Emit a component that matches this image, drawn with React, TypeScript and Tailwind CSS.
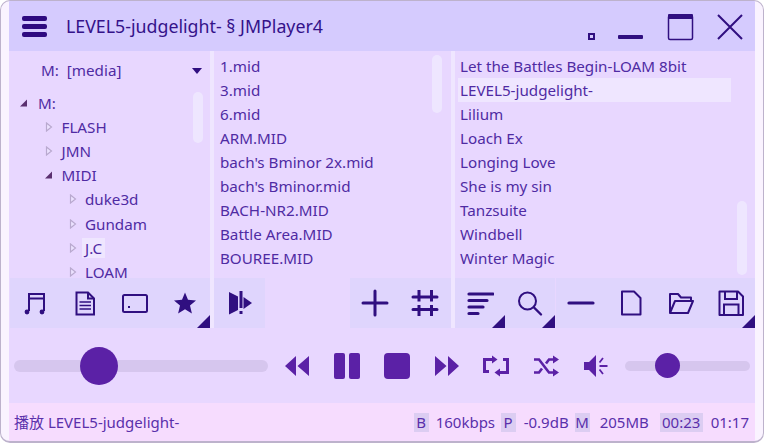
import React from "react";

const FONT = { fontFamily: '"Noto Sans", "Noto Sans CJK SC", sans-serif' };
const IC = "#300f80";
const PL = "#5b21a6";

function Corner() {
  return (
    <svg width="13" height="13" viewBox="0 0 13 13" className="absolute right-0 bottom-0">
      <path d="M13 0V13H0Z" fill={IC} />
    </svg>
  );
}

function Btn({ children, corner, w = "w-[50px]" }: { children: React.ReactNode; corner?: boolean; w?: string }) {
  return (
    <div className={`relative ${w} h-full flex items-center justify-center`}>
      {children}
      {corner && <Corner />}
    </div>
  );
}

function Ico({ w = 28, h = 28, children }: { w?: number; h?: number; children: React.ReactNode }) {
  return (
    <svg width={w} height={h} viewBox={`0 0 ${w} ${h}`} fill="none" stroke={IC} strokeWidth="2">
      {children}
    </svg>
  );
}

function TreeRow({ depth, open, label, hl }: { depth: number; open?: boolean; label: string; hl?: boolean }) {
  return (
    <div className="h-[24.1px] flex items-center relative shrink-0" style={{ paddingLeft: 26 + depth * 23.5 }}>
      <svg width="10" height="10" viewBox="0 0 10 10" className="absolute" style={{ left: 10 + (depth ? depth * 24 + 1 : 0) }}>
        {open ? (
          <path d="M8 1.5V8.5H1Z" fill="#5b3070" />
        ) : (
          <path d="M2.5 1L7.5 5L2.5 9Z" fill="#ece2ff" stroke="#b9a9cf" strokeWidth="1.2" />
        )}
      </svg>
      <span className={`px-[3px] leading-[20px] ${hl ? "bg-[#efe6ff]" : ""}`}>{label}</span>
    </div>
  );
}

function Row({ label, hl, pad = "pl-[6px]" }: { label: string; hl?: boolean; pad?: string }) {
  return (
    <div className={`h-[24.1px] flex items-center ${pad} whitespace-nowrap ${hl ? "bg-[#efe6ff]" : ""}`}>{label}</div>
  );
}

function Chip({ children, w }: { children: React.ReactNode; w: string }) {
  return <span className={`${w} h-[19px] bg-[#dccdf2] flex items-center justify-center`}>{children}</span>;
}

const mids = ["1.mid", "3.mid", "6.mid", "ARM.MID", "bach's Bminor 2x.mid", "bach's Bminor.mid", "BACH-NR2.MID", "Battle Area.MID", "BOUREE.MID"];
const songs = ["Let the Battles Begin-LOAM 8bit", "LEVEL5-judgelight-", "Lilium", "Loach Ex", "Longing Love", "She is my sin", "Tanzsuite", "Windbell", "Winter Magic"];

export default function App() {
  return (
    <div
      className="w-[764px] h-[443px] bg-[#faf3ff] border border-b-2 border-[#bdb2cc] rounded-[10px] pl-[8px] pr-[8px] flex flex-col overflow-hidden text-[15.2px] text-[#4f2ba3]"
      style={FONT}
    >
      {/* Title bar */}
      <div className="h-[50px] shrink-0 bg-[#d5cbfe] flex items-center text-[#34128a]">
        <div className="ml-[13px] w-[25px] flex flex-col gap-[3px]">
          <div className="h-[5px] rounded-[2px] bg-[#2e0a80]" />
          <div className="h-[5px] rounded-[2px] bg-[#2e0a80]" />
          <div className="h-[5px] rounded-[2px] bg-[#2e0a80]" />
        </div>
        <div className="ml-[19px] text-[17.8px] whitespace-nowrap">LEVEL5-judgelight- § JMPlayer4</div>
        <svg width="170" height="50" viewBox="0 0 170 50" fill="none" className="ml-auto mr-[12px]" stroke={IC}>
          <rect x="16" y="33" width="5" height="5" strokeWidth="2" />
          <rect x="45" y="34" width="25" height="4" rx="1" fill={IC} stroke="none" />
          <rect x="95.5" y="14.5" width="24" height="24" rx="1.5" strokeWidth="1.5" />
          <rect x="95" y="13" width="25" height="5" rx="1" fill={IC} stroke="none" />
          <path d="M145 14L169 38M169 14L145 38" strokeWidth="2" />
        </svg>
      </div>

      {/* Lists */}
      <div className="h-[277px] shrink-0 flex bg-[#efe6ff] gap-[4px]">
        {/* Tree */}
        <div className="w-[201px] bg-[#e8d7ff] flex flex-col relative">
          <div className="flex-1 overflow-hidden">
            <div className="h-[39px] flex items-center pl-[32px] pr-[6px]">
              <span>M:</span>
              <span className="ml-[8px]">[media]</span>
              <svg width="10" height="6" viewBox="0 0 10 6" className="ml-auto mr-[2px]">
                <path d="M0 0H10L5 6Z" fill={IC} />
              </svg>
            </div>
            <div className="mt-[1px]">
              <TreeRow depth={0} open label="M:" />
              <TreeRow depth={1} label="FLASH" />
              <TreeRow depth={1} label="JMN" />
              <TreeRow depth={1} open label="MIDI" />
              <TreeRow depth={2} label="duke3d" />
              <TreeRow depth={2} label="Gundam" />
              <TreeRow depth={2} hl label="J.C" />
              <TreeRow depth={2} label="LOAM" />
            </div>
          </div>
          <div className="absolute left-[184px] top-[41px] w-[10px] h-[51px] rounded-[5px] bg-[#eee6ff]" />
          <div className="h-[50px] shrink-0 bg-[#dfd5fd] flex ml-px">
            <Btn>
              <Ico>
                <path d="M8 22V5H23V22M8 9.5H23" />
                <circle cx="6" cy="23" r="2.4" fill={IC} stroke="none" />
                <circle cx="21" cy="23" r="2.4" fill={IC} stroke="none" />
              </Ico>
            </Btn>
            <Btn>
              <Ico>
                <path d="M5.5 3.5H17L23 9.5V25.5H5.5Z" />
                <path d="M17 3.5V9.5H23" />
                <path d="M8.5 13H20M8.5 16.5H20M8.5 20H20" strokeWidth="1.6" />
              </Ico>
            </Btn>
            <Btn>
              <Ico>
                <rect x="2" y="6" width="24" height="17" rx="1.5" />
                <rect x="7" y="17" width="2" height="2" fill={IC} stroke="none" />
              </Ico>
            </Btn>
            <Btn corner>
              <svg width="24" height="24" viewBox="0 0 24 24">
                <path d="M12 1.5L15 8.8L23 9.4L17 14.6L18.9 22.5L12 18.3L5.1 22.5L7 14.6L1 9.4L9 8.8Z" fill={IC} />
              </svg>
            </Btn>
          </div>
        </div>

        {/* Middle list */}
        <div className="w-[237px] bg-[#e8d7ff] flex flex-col relative">
          <div className="flex-1 overflow-hidden pt-[3px]">
            {mids.map((m) => (
              <Row key={m} label={m} />
            ))}
          </div>
          <div className="absolute left-[218px] top-[4px] w-[10px] h-[58px] rounded-[5px] bg-[#eee6ff]" />
          <div className="h-[50px] shrink-0 flex justify-between">
            <div className="bg-[#dfd5fd]">
              <Btn w="w-[51px]">
                <svg width="24" height="26" viewBox="0 0 24 26">
                  <path d="M1 2L10 6.5V20L1 24.5Z" fill={IC} />
                  <path d="M11.5 1H14.5V18H11.5ZM11.5 21H14.5V24H11.5Z" fill={IC} />
                  <path d="M15.5 7L24 13L15.5 19Z" fill={IC} />
                </svg>
              </Btn>
            </div>
            <div className="bg-[#dfd5fd] flex w-[101px]">
              <Btn>
                <Ico>
                  <path d="M14 2V26M2 14H26" strokeWidth="3" strokeLinecap="round" />
                </Ico>
              </Btn>
              <Btn>
                <Ico>
                  <path d="M2 8H26M2 20.500H26" strokeWidth="3" strokeLinecap="round" />
                  <path d="M8 1V12.500M20.500 1V12.500M8 16V27M20.500 16V27" strokeWidth="3" />
                </Ico>
              </Btn>
            </div>
          </div>
        </div>

        {/* Right list */}
        <div className="flex-1 bg-[#e8d7ff] flex flex-col relative">
          <div className="flex-1 overflow-hidden pt-[3px] pl-[3px] pr-[24px]">
            {songs.map((m) => (
              <Row key={m} label={m} pad="pl-[2px]" hl={m === "LEVEL5-judgelight-"} />
            ))}
          </div>
          <div className="absolute left-[282px] top-[150px] w-[10px] h-[74px] rounded-[5px] bg-[#eee6ff]" />
          <div className="h-[50px] shrink-0 bg-[#dfd5fd] flex">
            <Btn corner>
              <Ico>
                <path d="M3 5H27M3 11.5H21M3 18H17M3 24.5H12" strokeWidth="3.2" strokeLinecap="round" />
              </Ico>
            </Btn>
            <Btn corner>
              <Ico>
                <circle cx="11.5" cy="12" r="8.5" />
                <path d="M18 18.5L25 25.5" strokeWidth="2.4" strokeLinecap="round" />
              </Ico>
            </Btn>
            <div className="w-px bg-[#e8d7ff]" />
            <Btn>
              <Ico>
                <path d="M2 14H26" strokeWidth="3.2" strokeLinecap="round" />
              </Ico>
            </Btn>
            <Btn>
              <Ico>
                <path d="M5 2.5H17L23.5 9V25.5H5Z" strokeLinejoin="round" />
              </Ico>
            </Btn>
            <Btn>
              <Ico>
                <path d="M3 24V5H11L14 8.5H24V12M3 24H21L26 12H8L3 24Z" strokeLinejoin="round" />
              </Ico>
            </Btn>
            <Btn corner w="w-[49px]">
              <Ico>
                <path d="M2.5 2.5H21L26 7.5V26H2.5Z" strokeLinejoin="round" />
                <path d="M8 2.5V10H20V2.5M7 26V15.5H21.5V26" />
              </Ico>
            </Btn>
          </div>
        </div>
      </div>

      {/* Controls */}
      <div className="h-[75px] shrink-0 bg-[#e8d7ff] flex items-center pl-[5px] pr-[5px] pt-[1px]">
        <div className="relative w-[254px] h-[12px] rounded-[6px] bg-[#d6c6ee] shrink-0">
          <div className="absolute left-[66px] top-[-13px] w-[38px] h-[38px] rounded-full bg-[#5b21a6]" />
        </div>
        <div className="ml-[4px] w-[50px] flex justify-center">
          <svg width="24" height="20" viewBox="0 0 24 20" fill={PL}>
            <path d="M0 10L11 0V20ZM12.500 10L24 0V20Z" />
          </svg>
        </div>
        <div className="w-[50px] flex justify-center">
          <svg width="26" height="26" viewBox="0 0 26 26" fill={PL}>
            <rect width="11" height="26" rx="2" />
            <rect x="15" width="11" height="26" rx="2" />
          </svg>
        </div>
        <div className="w-[50px] flex justify-center">
          <div className="w-[26px] h-[26px] rounded-[4px] bg-[#5b21a6]" />
        </div>
        <div className="w-[49px] flex justify-center">
          <svg width="24" height="20" viewBox="0 0 24 20" fill={PL}>
            <path d="M0 0L11.500 10L0 20ZM13 0L24 10L13 20Z" />
          </svg>
        </div>
        <div className="w-[50px] flex justify-center">
          <svg width="26" height="22" viewBox="0 0 26 22" fill="none" stroke={PL} strokeWidth="3">
            <path d="M10 4.500H1.500V16.500H6M16 17.500H24.500V4.500H20" />
            <path d="M9 0.500L14.500 4.500L9 8.500ZM17 13.500L11.500 17.500L17 21.500Z" fill={PL} stroke="none" />
          </svg>
        </div>
        <div className="w-[49px] flex justify-center">
          <svg width="26" height="22" viewBox="0 0 26 22" fill="none" stroke={PL} strokeWidth="2.600">
            <path d="M1 4.500H6L16 17.500H21M1 17.500H6L9 13.500M13 8.500L16 4.500H21" />
            <path d="M20 0.500L26 4.500L20 8.500ZM20 13.500L26 17.500L20 21.500Z" fill={PL} stroke="none" />
          </svg>
        </div>
        <div className="w-[52px] flex justify-center">
          <svg width="24" height="24" viewBox="0 0 24 24" fill="none" stroke={PL} strokeWidth="1.800">
            <path d="M0 8H5L12 1V23L5 16H0Z" fill={PL} stroke="none" />
            <path d="M15.500 12H23.500M15.500 8.500L19 4M15.500 15.500L19 20" />
          </svg>
        </div>
        <div className="relative ml-[3px] flex-1 h-[10px] rounded-[5px] bg-[#d6c6ee]">
          <div className="absolute left-[30px] top-[-8px] w-[25px] h-[25px] rounded-full bg-[#5b21a6]" />
        </div>
      </div>

      {/* Status bar */}
      <div className="flex-1 bg-[#f6dcfe] flex items-center pl-[5px] pr-[6px] text-[15px] text-[#5a30ab] whitespace-nowrap">
        <span>播放 LEVEL5-judgelight-</span>
        <div className="ml-auto flex items-center">
          <Chip w="w-[15px]">B</Chip>
          <span className="ml-[7px] w-[65px]">160kbps</span>
          <Chip w="w-[15px]">P</Chip>
          <span className="ml-[8px] w-[51px]">-0.9dB</span>
          <Chip w="w-[15px]">M</Chip>
          <span className="ml-[10px] w-[60px]">205MB</span>
          <Chip w="w-[43px]">00:23</Chip>
          <span className="ml-[8px]">01:17</span>
        </div>
      </div>
    </div>
  );
}
